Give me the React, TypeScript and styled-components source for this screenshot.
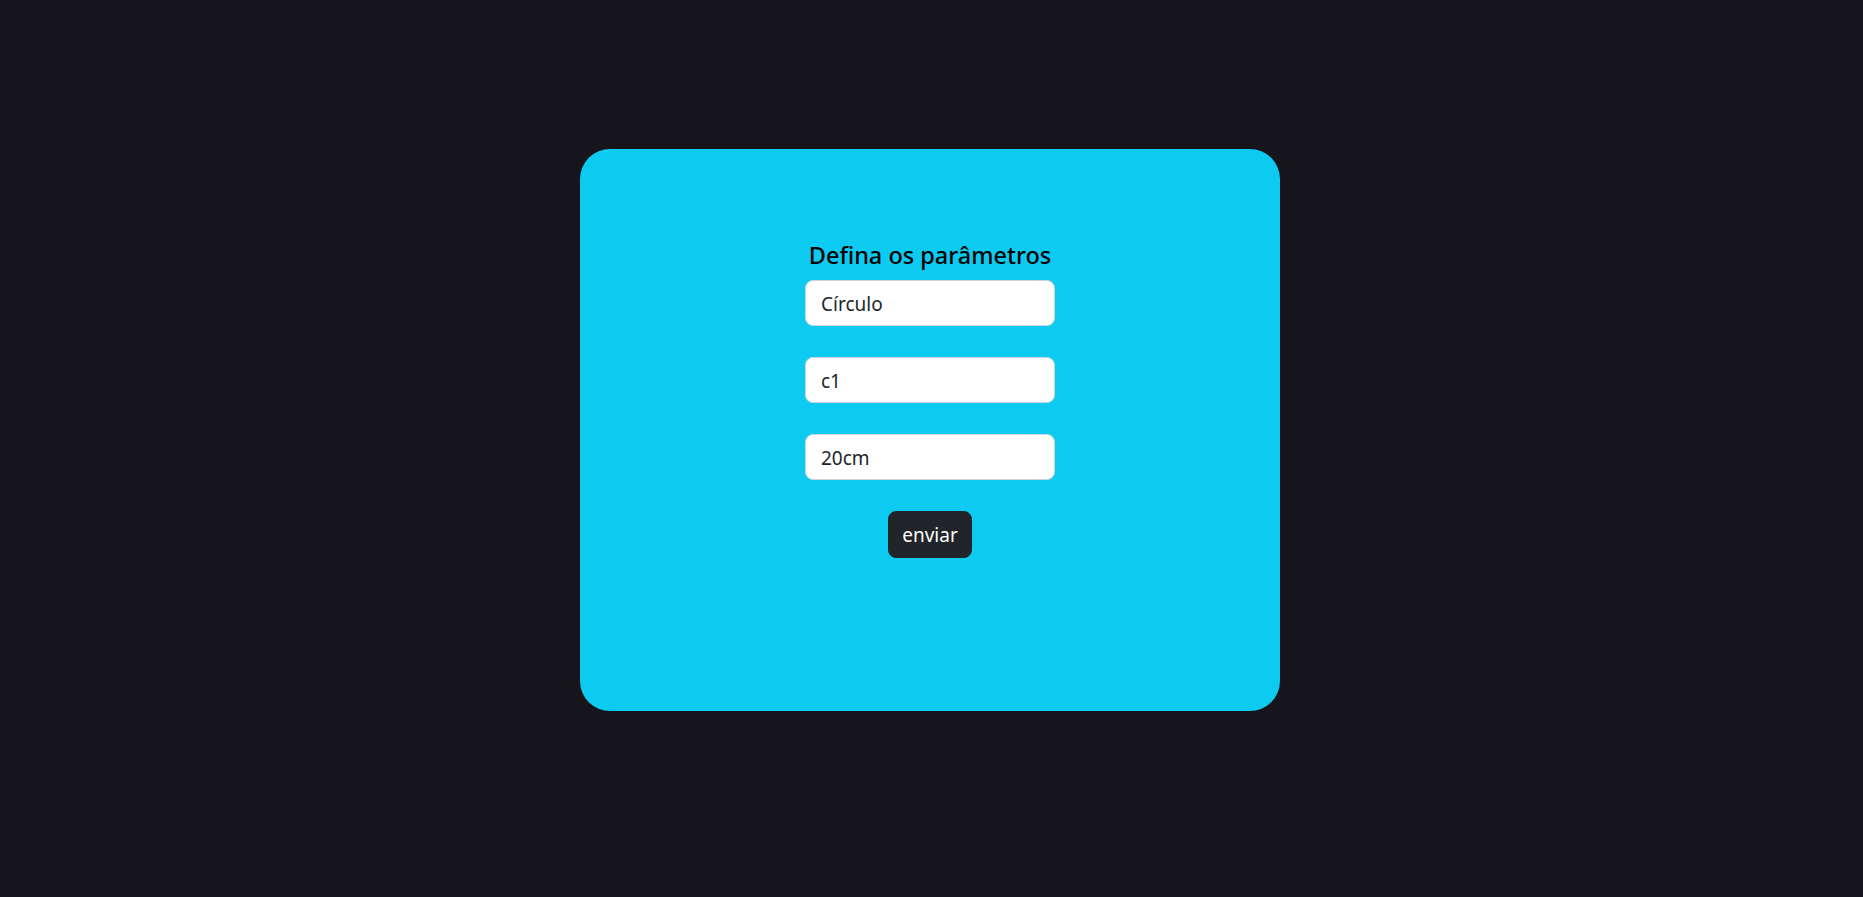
import styled, { createGlobalStyle } from "styled-components";

const GlobalStyle = createGlobalStyle`
  body {
    margin: 0;
    background-color: #17151c;
    font-family: "Noto Sans", "Open Sans", sans-serif;
  }
`;

const Page = styled.main`
  display: flex;
  justify-content: center;
  padding: 149px 3px 0 0;
  min-height: 100vh;
  box-sizing: border-box;
`;

const Card = styled.section`
  width: 700px;
  height: 562px;
  box-sizing: border-box;
  padding-top: 92px;
  background-color: #0dcaf0;
  border-radius: 30px;
  display: flex;
  flex-direction: column;
  align-items: center;
`;

const Title = styled.h4`
  margin: 0 0 10px;
  font-size: 23.5px;
  font-weight: 500;
  line-height: 29px;
  color: #000;
`;

const Field = styled.input`
  width: 250px;
  height: 46px;
  box-sizing: border-box;
  margin: 0 0 31px;
  padding: 2px 15px 0;
  font-family: inherit;
  font-size: 19px;
  color: #212529;
  background-color: #fff;
  border: 1px solid #ced4da;
  border-radius: 8px;
  outline: none;
`;

const SendButton = styled.button`
  height: 47px;
  padding: 0 13px;
  font-family: inherit;
  font-size: 19px;
  color: #fff;
  background-color: #212529;
  border: 1px solid #212529;
  border-radius: 8px;
  cursor: pointer;
`;

export default function App() {
  return (
    <>
      <GlobalStyle />
      <Page>
        <Card>
          <Title>Defina os parâmetros</Title>
          <Field defaultValue="Círculo" />
          <Field defaultValue="c1" />
          <Field defaultValue="20cm" />
          <SendButton type="button">enviar</SendButton>
        </Card>
      </Page>
    </>
  );
}
